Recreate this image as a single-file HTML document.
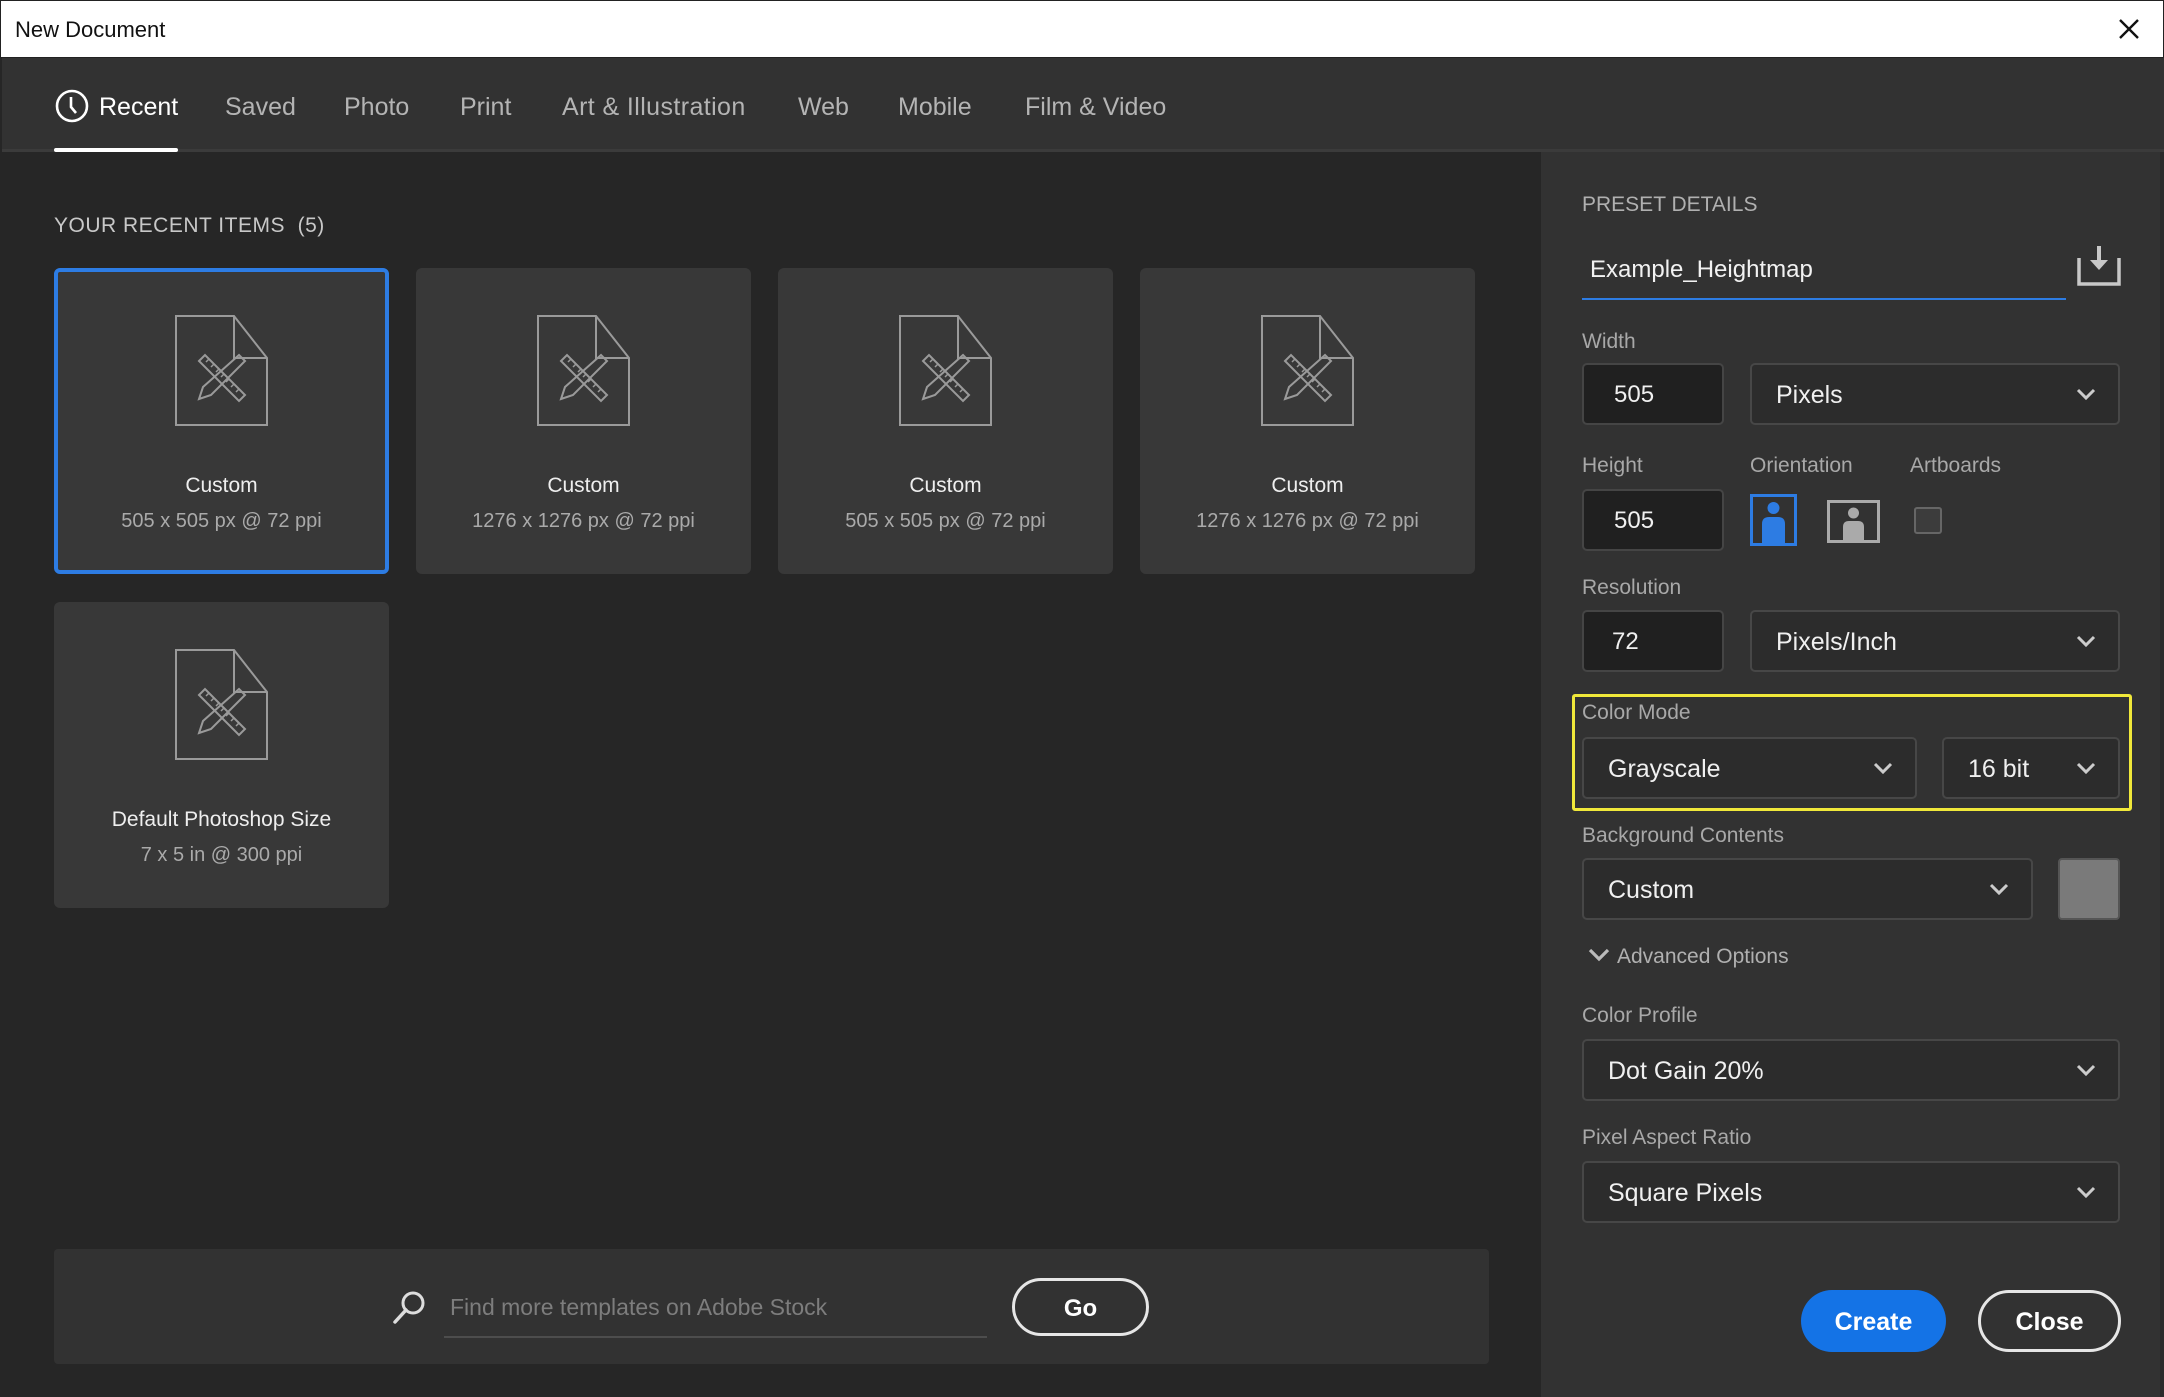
<!DOCTYPE html>
<html><head><meta charset="utf-8"><style>
*{box-sizing:border-box;margin:0;padding:0}
body{width:2164px;height:1397px;background:#262626;font-family:"Liberation Sans",sans-serif;position:relative;overflow:hidden;color:#ddd}
.a{position:absolute}
.t{white-space:nowrap}
.card{position:absolute;width:335px;height:306px;background:#383838;border-radius:6px}
.card svg{position:absolute;left:121px;top:47px}
.card .n{position:absolute;top:206px;width:100%;text-align:center;font-size:21px;color:#eee}
.card .s{position:absolute;top:242px;width:100%;text-align:center;font-size:20px;color:#aaa}
.lbl{position:absolute;font-size:21px;color:#a8a8a8;white-space:nowrap}
.inp{position:absolute;background:#202020;border:2px solid #454545;border-radius:5px;font-size:24px;color:#f0f0f0;padding-left:30px;display:flex;align-items:center;padding-top:2px}
.dd{position:absolute;background:#2c2c2c;border:2px solid #474747;border-radius:5px;font-size:25px;color:#f0f0f0;padding-left:24px;display:flex;align-items:center;padding-top:3px}
.dd svg{position:absolute;right:22px;top:50%;margin-top:-6px}
</style></head><body>
<div class="a" style="left:0;top:0;width:2164px;height:58px;background:#fff;border:1px solid #222"></div>
<div class="a t" style="left:15px;top:17px;font-size:22px;color:#111">New Document</div>
<svg class="a" style="left:2118px;top:18px" width="22" height="22" viewBox="0 0 22 22"><path d="M2 2L20 20M20 2L2 20" stroke="#111" stroke-width="2.4"/></svg>
<div class="a" style="left:2px;top:58px;width:2162px;height:94px;background:#323232;border-bottom:3px solid #3b3b3b"></div>
<svg class="a" style="left:55px;top:89px" width="34" height="34" viewBox="0 0 34 34"><circle cx="17" cy="17" r="15" fill="none" stroke="#fff" stroke-width="2.6"/><path d="M16 8V18L21 24" fill="none" stroke="#fff" stroke-width="2.6"/></svg>
<div class="a t" style="left:99px;top:93px;font-size:25px;color:#fff">Recent</div>
<div class="a" style="left:54px;top:148px;width:124px;height:4px;background:#fff;border-radius:2px"></div>
<div class="a t" style="left:225px;top:93px;font-size:25px;color:#b4b4b4">Saved</div>
<div class="a t" style="left:344px;top:93px;font-size:25px;color:#b4b4b4">Photo</div>
<div class="a t" style="left:460px;top:93px;font-size:25px;color:#b4b4b4">Print</div>
<div class="a t" style="left:562px;top:93px;font-size:25px;color:#b4b4b4;letter-spacing:0.4px">Art &amp; Illustration</div>
<div class="a t" style="left:798px;top:93px;font-size:25px;color:#b4b4b4">Web</div>
<div class="a t" style="left:898px;top:93px;font-size:25px;color:#b4b4b4">Mobile</div>
<div class="a t" style="left:1025px;top:93px;font-size:25px;color:#b4b4b4">Film &amp; Video</div>
<div class="a t" style="left:54px;top:214px;font-size:21px;color:#c8c8c8;letter-spacing:0.5px">YOUR RECENT ITEMS&nbsp;&nbsp;(5)</div>
<svg width="0" height="0" style="position:absolute"><defs><g id="doc"><path d="M1 1H59L92 43V110H1Z M59 1V43H92" fill="none" stroke="#9a9a9a" stroke-width="2"/><g transform="translate(0,-14)"><path d="M24 60L30 54L70 94L64 100Z" fill="none" stroke="#9a9a9a" stroke-width="2"/><path d="M31 61L34 58M36 66L39 63M41 71L44 68M46 76L49 73M51 81L54 78M56 86L59 83M61 91L64 88" stroke="#9a9a9a" stroke-width="1.5"/><path d="M64 54L70 60L36 94L24 98L28 86Z" fill="none" stroke="#9a9a9a" stroke-width="2"/></g></g></defs></svg>
<div class="card" style="left:54px;top:268px;border:4px solid #2d7ce3;background:#383838"><svg style="left:117px;top:43px" width="93" height="111"><use href="#doc"/></svg><div class="n" style="top:202px">Custom</div><div class="s" style="top:238px">505 x 505 px @ 72 ppi</div></div>
<div class="card" style="left:416px;top:268px"><svg width="93" height="111"><use href="#doc"/></svg><div class="n">Custom</div><div class="s">1276 x 1276 px @ 72 ppi</div></div>
<div class="card" style="left:778px;top:268px"><svg width="93" height="111"><use href="#doc"/></svg><div class="n">Custom</div><div class="s">505 x 505 px @ 72 ppi</div></div>
<div class="card" style="left:1140px;top:268px"><svg width="93" height="111"><use href="#doc"/></svg><div class="n">Custom</div><div class="s">1276 x 1276 px @ 72 ppi</div></div>
<div class="card" style="left:54px;top:602px"><svg width="93" height="111"><use href="#doc"/></svg><div class="n">Default Photoshop Size</div><div class="s">7 x 5 in @ 300 ppi</div></div>
<div class="a" style="left:54px;top:1249px;width:1435px;height:115px;background:#323232;border-radius:4px"></div>
<svg class="a" style="left:390px;top:1288px" width="38" height="38" viewBox="0 0 38 38"><circle cx="23" cy="15" r="10" fill="none" stroke="#ddd" stroke-width="3"/><path d="M16 22L5 34" stroke="#ddd" stroke-width="3.5" stroke-linecap="round"/></svg>
<div class="a t" style="left:450px;top:1294px;font-size:23px;color:#7d7d7d">Find more templates on Adobe Stock</div>
<div class="a" style="left:444px;top:1336px;width:543px;height:2px;background:#4d4d4d"></div>
<div class="a" style="left:1012px;top:1278px;width:137px;height:58px;border:3px solid #e6e6e6;border-radius:29px;font-size:24px;font-weight:bold;color:#fff;display:flex;align-items:center;justify-content:center;padding-top:3px">Go</div>
<div class="a" style="left:1541px;top:152px;width:623px;height:1245px;background:#323232"></div>
<div class="a" style="left:2160px;top:152px;width:4px;height:1245px;background:#2a2a2a"></div>
<div class="lbl" style="left:1582px;top:193px;color:#b0b0b0">PRESET DETAILS</div>
<div class="a t" style="left:1590px;top:256px;font-size:24px;color:#f2f2f2">Example_Heightmap</div>
<div class="a" style="left:1582px;top:298px;width:484px;height:2px;background:#2d7ce3"></div>
<svg class="a" style="left:2077px;top:244px" width="44" height="42" viewBox="0 0 44 42"><path d="M2 14V40H42V14" fill="none" stroke="#c8c8c8" stroke-width="3.5"/><path d="M22 2V20" stroke="#c8c8c8" stroke-width="4"/><path d="M13 16L22 26L31 16Z" fill="#c8c8c8"/></svg>
<div class="lbl" style="left:1582px;top:330px">Width</div>
<div class="inp" style="left:1582px;top:363px;width:142px;height:62px">505</div>
<div class="dd" style="left:1750px;top:363px;width:370px;height:62px">Pixels<svg width="20" height="12"><path d="M2 2L10 10L18 2" fill="none" stroke="#ccc" stroke-width="3"/></svg></div>
<div class="lbl" style="left:1582px;top:454px">Height</div>
<div class="lbl" style="left:1750px;top:454px">Orientation</div>
<div class="lbl" style="left:1910px;top:454px">Artboards</div>
<div class="inp" style="left:1582px;top:489px;width:142px;height:62px">505</div>
<svg class="a" style="left:1750px;top:494px" width="47" height="52" viewBox="0 0 47 52"><rect x="1.5" y="1.5" width="44" height="49" fill="none" stroke="#2d7ce3" stroke-width="3"/><circle cx="23.5" cy="14" r="6" fill="#2d7ce3"/><path d="M12 49V30Q12 23 19 23H28Q35 23 35 30V49Z" fill="#2d7ce3"/></svg>
<svg class="a" style="left:1827px;top:500px" width="53" height="43" viewBox="0 0 53 43"><rect x="1.5" y="1.5" width="50" height="40" fill="none" stroke="#aaa" stroke-width="3"/><circle cx="26.5" cy="13" r="5.5" fill="#aaa"/><path d="M16 41V27Q16 21 22 21H31Q37 21 37 27V41Z" fill="#aaa"/></svg>
<div class="a" style="left:1914px;top:507px;width:28px;height:27px;border:2px solid #666;background:#3c3c3c;border-radius:3px"></div>
<div class="lbl" style="left:1582px;top:576px">Resolution</div>
<div class="inp" style="left:1582px;top:610px;width:142px;height:62px;padding-left:28px">72</div>
<div class="dd" style="left:1750px;top:610px;width:370px;height:62px">Pixels/Inch<svg width="20" height="12"><path d="M2 2L10 10L18 2" fill="none" stroke="#ccc" stroke-width="3"/></svg></div>
<div class="a" style="left:1572px;top:694px;width:560px;height:117px;border:3px solid #f0e83a;border-radius:3px"></div>
<div class="lbl" style="left:1582px;top:701px">Color Mode</div>
<div class="dd" style="left:1582px;top:737px;width:335px;height:62px">Grayscale<svg width="20" height="12"><path d="M2 2L10 10L18 2" fill="none" stroke="#ccc" stroke-width="3"/></svg></div>
<div class="dd" style="left:1942px;top:737px;width:178px;height:62px">16 bit<svg width="20" height="12"><path d="M2 2L10 10L18 2" fill="none" stroke="#ccc" stroke-width="3"/></svg></div>
<div class="lbl" style="left:1582px;top:824px">Background Contents</div>
<div class="dd" style="left:1582px;top:858px;width:451px;height:62px">Custom<svg width="20" height="12"><path d="M2 2L10 10L18 2" fill="none" stroke="#ccc" stroke-width="3"/></svg></div>
<div class="a" style="left:2058px;top:858px;width:62px;height:62px;background:#7a7a7a;border:2px solid #555;border-radius:4px"></div>
<svg class="a" style="left:1588px;top:948px" width="22" height="14"><path d="M2 2L11 11L20 2" fill="none" stroke="#bbb" stroke-width="3.2"/></svg>
<div class="lbl" style="left:1617px;top:945px;color:#b0b0b0">Advanced Options</div>
<div class="lbl" style="left:1582px;top:1004px">Color Profile</div>
<div class="dd" style="left:1582px;top:1039px;width:538px;height:62px">Dot Gain 20%<svg width="20" height="12"><path d="M2 2L10 10L18 2" fill="none" stroke="#ccc" stroke-width="3"/></svg></div>
<div class="lbl" style="left:1582px;top:1126px">Pixel Aspect Ratio</div>
<div class="dd" style="left:1582px;top:1161px;width:538px;height:62px">Square Pixels<svg width="20" height="12"><path d="M2 2L10 10L18 2" fill="none" stroke="#ccc" stroke-width="3"/></svg></div>
<div class="a" style="left:1801px;top:1290px;width:145px;height:62px;background:#1473e6;border-radius:31px;font-size:25px;font-weight:bold;color:#fff;display:flex;align-items:center;justify-content:center;padding-top:3px">Create</div>
<div class="a" style="left:1978px;top:1290px;width:143px;height:62px;border:3px solid #e6e6e6;border-radius:31px;font-size:25px;font-weight:bold;color:#fff;display:flex;align-items:center;justify-content:center;padding-top:3px">Close</div>
</body></html>
